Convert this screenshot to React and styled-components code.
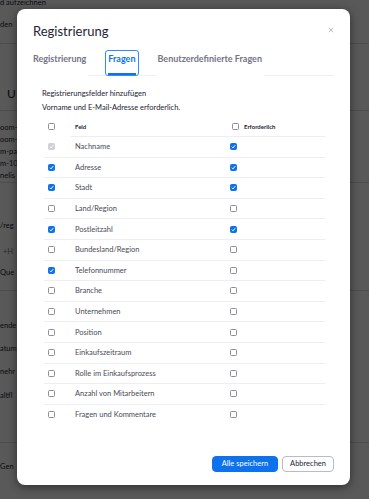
import React from 'react';
import styled, { createGlobalStyle } from 'styled-components';

const GlobalStyle = createGlobalStyle`
  html, body {
    margin: 0;
    padding: 0;
  }
  body {
    font-family: Lato, "Noto Sans", "Liberation Sans", sans-serif;
    background: #fff;
  }
`;

const Page = styled.div`
  position: relative;
  width: 369px;
  height: 499px;
  overflow: hidden;
  background: #fff;
  color: #232333;
`;

const BgSection = styled.div`
  height: ${p => p.$h}px;
  border-bottom: ${p => (p.$line ? '1px solid #dcdce4' : '0')};
  display: flex;
  flex-direction: column;
  overflow: hidden;
`;

const BgText = styled.div`
  margin-top: ${p => p.$top || 0}px;
  padding-left: ${p => p.$indent || 0}px;
  font-size: ${p => p.$size || 7.5}px;
  line-height: ${p => (p.$size ? p.$size + 4 : 12)}px;
  font-weight: ${p => (p.$bold ? 700 : 400)};
  color: ${p => (p.$muted ? '#747487' : '#232333')};
  white-space: nowrap;
`;

const Overlay = styled.div`
  position: absolute;
  inset: 0;
  background: rgba(0, 0, 0, 0.65);
`;

const Modal = styled.div`
  position: absolute;
  left: 17px;
  top: 9px;
  width: 333px;
  height: 476px;
  box-sizing: border-box;
  padding: 14px 16px 13px;
  background: #fff;
  border-radius: 8px;
  box-shadow: 0 2px 10px rgba(0, 0, 0, 0.5);
  display: flex;
  flex-direction: column;
`;

const Header = styled.div`
  display: flex;
  justify-content: space-between;
  align-items: flex-start;
`;

const Title = styled.h2`
  margin: 0;
  font-size: 13px;
  line-height: 16px;
  font-weight: 400;
  color: #232333;
`;

const Close = styled.button`
  border: 0;
  background: none;
  padding: 0;
  margin: 4px 0 0;
  width: 6px;
  height: 6px;
  display: flex;
  cursor: pointer;
`;

const TabNav = styled.div`
  margin-top: 11px;
  height: 25px;
  border-bottom: 1px solid #ededf4;
`;

const TabList = styled.div`
  display: flex;
  align-items: flex-start;
  gap: 16px;
  margin-left: -3px;
`;

const Tab = styled.button`
  border: 1px solid ${p => (p.$active ? '#2d8cff' : 'transparent')};
  border-radius: 3px;
  background: #fff;
  padding: 2px 2px 0;
  margin: 0;
  font-family: inherit;
  cursor: pointer;
`;

const TabLabel = styled.span`
  display: block;
  font-size: 9px;
  line-height: 11px;
  font-weight: 700;
  padding-bottom: 9px;
  color: ${p => (p.$active ? '#0e72ed' : '#747487')};
  border-bottom: 2px solid ${p => (p.$active ? '#0e72ed' : 'transparent')};
`;

const Section = styled.div`
  margin: 12px 9px 0;
`;

const Note = styled.p`
  margin: 0 0 3px;
  font-size: 7.5px;
  line-height: 11px;
  color: #232333;
`;

const Table = styled.div`
  margin-left: 2px;
`;

const Row = styled.div`
  display: grid;
  grid-template-columns: 27px 159px 1fr;
  height: ${p => (p.$head ? 21 : 20.6)}px;
`;

const Cell = styled.div`
  display: flex;
  align-items: center;
  gap: 5px;
  box-sizing: border-box;
  padding-left: ${p => p.$pad || 0}px;
  border-bottom: 1px solid ${p => (p.$line ? '#ededf4' : 'transparent')};
  font-size: ${p => (p.$head ? 6 : 7.5)}px;
  font-weight: ${p => (p.$head ? 700 : 400)};
  color: ${p => (p.$head ? '#232333' : '#4a4a58')};
  white-space: nowrap;
`;

const Box = styled.span`
  flex: none;
  box-sizing: border-box;
  width: 7px;
  height: 7px;
  margin-top: ${p => p.$drop || 0}px;
  margin-left: ${p => p.$shift || 0}px;
  border-radius: 1.5px;
  border: 1px solid ${p => (p.$disabled ? '#cfcfd6' : p.$checked ? '#0e72ed' : '#8d8d98')};
  background: ${p => (p.$disabled ? '#cfcfd6' : p.$checked ? '#0e72ed' : '#fff')};
  display: flex;
  align-items: center;
  justify-content: center;
`;

const Footer = styled.div`
  margin-top: auto;
  display: flex;
  justify-content: flex-end;
  gap: 4px;
`;

const Button = styled.button`
  height: 16px;
  box-sizing: border-box;
  padding: 0 ${p => (p.$primary ? 9 : 7)}px;
  border-radius: 4px;
  border: 1px solid ${p => (p.$primary ? '#0e72ed' : '#babacc')};
  background: ${p => (p.$primary ? '#0e72ed' : '#fff')};
  color: ${p => (p.$primary ? '#fff' : '#232333')};
  font-family: inherit;
  font-size: 7.5px;
  line-height: 14px;
  cursor: pointer;
`;

const Check = ({ checked, disabled, drop, shift }) => (
  <Box $checked={checked} $disabled={disabled} $drop={drop} $shift={shift}>
    {(checked || disabled) && (
      <svg width="5" height="5" viewBox="0 0 10 10">
        <path d="M1.6 5.4 L4 7.8 L8.6 2.2" fill="none" stroke="#fff" strokeWidth="1.9" />
      </svg>
    )}
  </Box>
);

const fields = [
  { name: 'Nachname', on: true, req: true, locked: true },
  { name: 'Adresse', on: true, req: true },
  { name: 'Stadt', on: true, req: true },
  { name: 'Land/Region' },
  { name: 'Postleitzahl', on: true, req: true },
  { name: 'Bundesland/Region' },
  { name: 'Telefonnummer', on: true },
  { name: 'Branche' },
  { name: 'Unternehmen' },
  { name: 'Position' },
  { name: 'Einkaufszeitraum' },
  { name: 'Rolle im Einkaufsprozess' },
  { name: 'Anzahl von Mitarbeitern' },
  { name: 'Fragen und Kommentare' },
];

const tabs = ['Registrierung', 'Fragen', 'Benutzerdefinierte Fragen'];

export default function App() {
  return (
    <Page>
      <GlobalStyle />
      {/* page behind the dialog: only the left strip shows */}
      <BgSection $h={43} $line>
        <BgText $top={-3}>d aufzeichnen</BgText>
        <BgText $top={9.5}>den</BgText>
      </BgSection>
      <BgSection $h={66} $line>
        <BgText $top={42} $indent={7} $size={12}>U</BgText>
      </BgSection>
      <BgSection $h={71} $line>
        <BgText $top={11}>oom-</BgText>
        <BgText>oom-</BgText>
        <BgText>m-pa</BgText>
        <BgText>m-10</BgText>
        <BgText>nelis</BgText>
      </BgSection>
      <BgSection $h={107} $line>
        <BgText $top={37}>/reg</BgText>
        <BgText $top={14} $indent={3} $muted>+H</BgText>
        <BgText $top={8.5}>Que</BgText>
      </BgSection>
      <BgSection $h={151} $line>
        <BgText $top={29}>ende</BgText>
        <BgText $top={11}>atum</BgText>
        <BgText $top={11}>nehr</BgText>
        <BgText $top={12}>altfl</BgText>
      </BgSection>
      <BgSection $h={56}>
        <BgText $top={18}>Gen</BgText>
      </BgSection>

      <Overlay />

      <Modal>
        <Header>
          <Title>Registrierung</Title>
          <Close aria-label="Schließen">
            <svg width="6" height="6" viewBox="0 0 6 6">
              <path d="M0.8 0.8 L5.2 5.2 M5.2 0.8 L0.8 5.2" stroke="#b4b4bc" strokeWidth="0.9" />
            </svg>
          </Close>
        </Header>

        <TabNav>
          <TabList>
            {tabs.map(t => (
              <Tab key={t} $active={t === 'Fragen'}>
                <TabLabel $active={t === 'Fragen'}>{t}</TabLabel>
              </Tab>
            ))}
          </TabList>
        </TabNav>

        <Section>
          <Note>Registrierungsfelder hinzufügen</Note>
          <Note>Vorname und E-Mail-Adresse erforderlich.</Note>
          <Table>
            <Row $head>
              <Cell $pad={4}>
                <Check />
              </Cell>
              <Cell $pad={4} $head $line>Feld</Cell>
              <Cell $head $line>
                <Check drop={1.5} shift={2} />
                Erforderlich
              </Cell>
            </Row>
            {fields.map((f, i) => {
              const line = i < fields.length - 1;
              return (
                <Row key={f.name}>
                  <Cell $pad={4} $line={line}>
                    <Check checked={f.on && !f.locked} disabled={f.locked} />
                  </Cell>
                  <Cell $pad={4} $line={line}>{f.name}</Cell>
                  <Cell $line={line}>
                    <Check checked={f.req} />
                  </Cell>
                </Row>
              );
            })}
          </Table>
        </Section>

        <Footer>
          <Button $primary>Alle speichern</Button>
          <Button>Abbrechen</Button>
        </Footer>
      </Modal>
    </Page>
  );
}
